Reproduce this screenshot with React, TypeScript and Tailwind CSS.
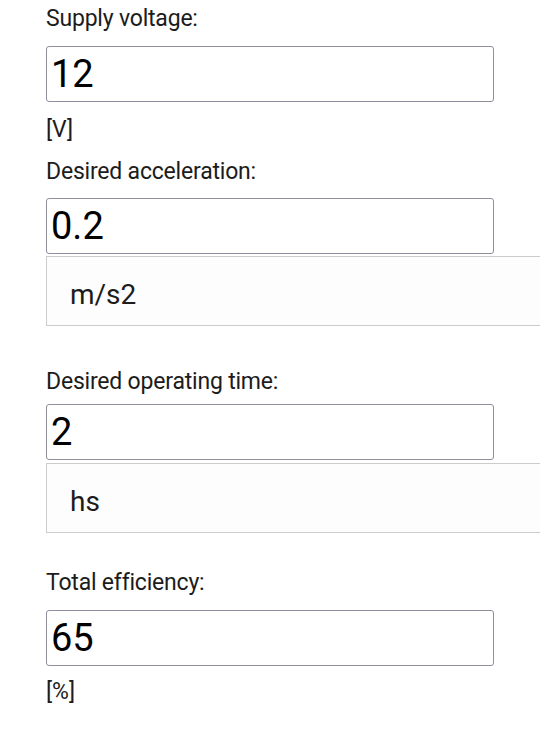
import React from "react";

function Label({ text, className }: { text: string; className: string }) {
  return (
    <div className={"h-[28px] text-[23px] leading-[28px] tracking-[-0.2px] text-[#1c1c1c] " + className}>{text}</div>
  );
}

function NumInput({ value, className }: { value: string; className: string }) {
  return (
    <input
      type="text"
      defaultValue={value}
      className={
        "block h-[56px] w-[448px] rounded-[3px] border border-[#8f8f9d] bg-white px-[4px] font-['Roboto'] text-[38px] text-black outline-none " +
        className
      }
    />
  );
}

function Unit({ text, className }: { text: string; className: string }) {
  return <div className={"h-[28px] text-[23px] leading-[28px] text-[#1c1c1c] " + className}>{text}</div>;
}

function SelectBox({ text, className }: { text: string; className: string }) {
  return (
    <div
      className={
        "h-[70px] w-[520px] border border-[#cccccc] bg-[#fdfdfd] pl-[23px] pt-[24px] text-[28px] leading-[28px] text-[#1c1c1c] " +
        className
      }
    >
      {text}
    </div>
  );
}

export default function App() {
  return (
    <div className="min-h-[739px] w-[540px] overflow-hidden bg-white pl-[46px] pt-[5px] font-['Roboto',sans-serif]">
      <Label text="Supply voltage:" className="" />
      <NumInput value="12" className="mt-[13px]" />
      <Unit text="[V]" className="mt-[14px]" />

      <Label text="Desired acceleration:" className="mt-[14px]" />
      <NumInput value="0.2" className="mt-[12px]" />
      <SelectBox text="m/s2" className="mt-[2px]" />

      <Label text="Desired operating time:" className="mt-[42px]" />
      <NumInput value="2" className="mt-[8px]" />
      <SelectBox text="hs" className="mt-[3px]" />

      <Label text="Total efficiency:" className="mt-[36px]" />
      <NumInput value="65" className="mt-[13px]" />
      <Unit text="[%]" className="mt-[12px]" />
    </div>
  );
}
